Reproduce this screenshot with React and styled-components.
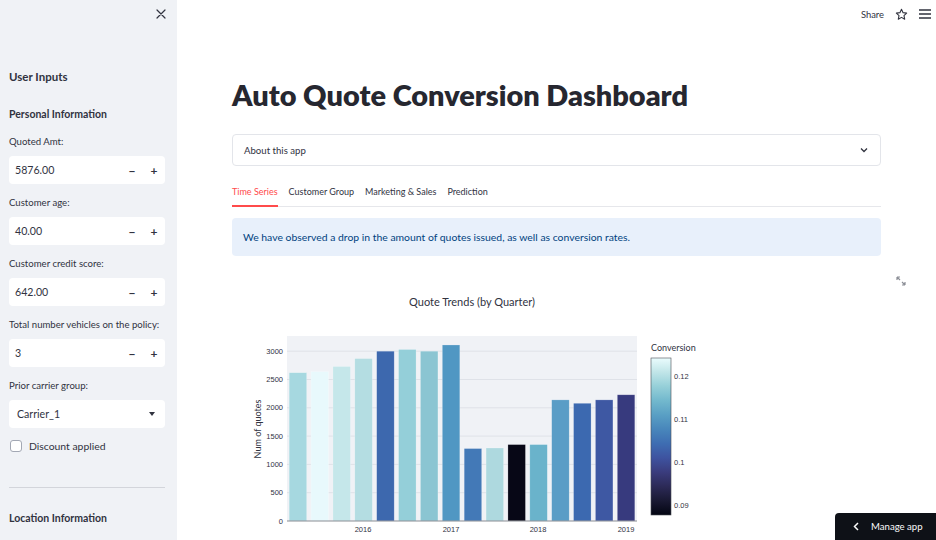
import React from 'react';
import styled, { createGlobalStyle } from 'styled-components';

const GlobalStyle = createGlobalStyle`
  html, body { margin: 0; padding: 0; }
  body {
    font-family: "Lato", "Noto Sans", sans-serif;
    color: #31333f;
    background: #ffffff;
    overflow: hidden;
  }
`;

const Page = styled.div`
  display: flex;
  width: 936px;
  height: 540px;
  overflow: hidden;
`;

const Sidebar = styled.aside`
  width: 177px;
  flex-shrink: 0;
  background: #f0f2f6;
  padding: 0 12px 0 9px;
  box-sizing: border-box;
  display: flex;
  flex-direction: column;
  & > * { flex-shrink: 0; }
`;

const CloseRow = styled.div`
  height: 28px;
  display: flex;
  align-items: center;
  justify-content: flex-end;
  margin-right: -1px;
`;

const SideHeading = styled.div`
  font-weight: 700;
  font-size: ${p => p.big ? '11.5px' : '10.5px'};
  line-height: 16px;
  color: #31333f;
  margin-top: ${p => p.top}px;
`;

const Field = styled.div`
  display: flex;
  flex-direction: column;
  margin-top: ${p => p.top || 12}px;
`;

const Label = styled.label`
  font-size: 9.6px;
  line-height: 14px;
  color: #31333f;
  margin-bottom: 7px;
`;

const InputBox = styled.div`
  height: 28px;
  background: #ffffff;
  border-radius: 4px;
  display: flex;
  align-items: center;
  padding-left: ${p => p.select ? 8 : 6}px;
  font-size: 10.6px;
  color: #31333f;
`;

const Value = styled.span`
  flex: 1;
`;

const Step = styled.span`
  width: 22px;
  text-align: center;
  font-size: 12px;
  font-weight: 700;
  color: #31333f;
`;

const Caret = styled.span`
  width: 0;
  height: 0;
  border-left: 3.5px solid transparent;
  border-right: 3.5px solid transparent;
  border-top: 4px solid #31333f;
  margin-right: 10px;
`;

const CheckRow = styled.div`
  display: flex;
  align-items: center;
  height: 16px;
  margin-top: 10px;
  font-size: 10.4px;
  gap: 7px;
`;

const CheckBox = styled.span`
  width: 10px;
  height: 10px;
  border: 1px solid #a3a8b4;
  border-radius: 3px;
  background: #ffffff;
  margin-left: 1px;
`;

const Divider = styled.hr`
  border: none;
  border-top: 1px solid #d3d5db;
  margin: 33px 0 0;
`;

const Main = styled.main`
  flex: 1;
  position: relative;
  display: flex;
  justify-content: center;
`;

const Content = styled.div`
  width: 649px;
  display: flex;
  flex-direction: column;
  & > * { flex-shrink: 0; }
`;

const Title = styled.h1`
  margin: 75px 0 0;
  font-size: 28.9px;
  line-height: 40px;
  font-weight: 800;
  color: #262730;
`;

const Expander = styled.div`
  margin-top: 19px;
  height: 32px;
  border: 1px solid #e3e5ea;
  border-radius: 4px;
  box-sizing: border-box;
  display: flex;
  align-items: center;
  justify-content: space-between;
  padding: 0 11px;
  font-size: 9.6px;
`;

const TabList = styled.div`
  margin-top: 14px;
  display: flex;
  gap: 11px;
  border-bottom: 1px solid #e6e7eb;
`;

const Tab = styled.div`
  font-size: 9px;
  line-height: 12px;
  padding: 6px 0 7px;
  margin-bottom: -1px;
  color: ${p => p.active ? '#ff4b4b' : '#31333f'};
  border-bottom: 2px solid ${p => p.active ? '#ff4b4b' : 'transparent'};
`;

const Info = styled.div`
  margin-top: 11px;
  height: 38px;
  background: #e8f0fb;
  border-radius: 4px;
  display: flex;
  align-items: center;
  padding: 0 11px;
  font-size: 10.4px;
  color: #004280;
`;

const ChartWrap = styled.div`
  position: relative;
  margin-top: 10px;
  height: 274px;
`;

const ExpandBtn = styled.div`
  position: absolute;
  right: -26px;
  top: 5px;
`;

const TopBar = styled.div`
  position: absolute;
  top: 0;
  right: 0;
  height: 28px;
  display: flex;
  align-items: center;
  gap: 11px;
  padding-right: 5px;
  font-size: 9.4px;
  color: #31333f;
`;

const ManageBtn = styled.div`
  position: absolute;
  right: 0;
  bottom: 0;
  width: 101px;
  height: 27px;
  background: #0e1117;
  border-top-left-radius: 4px;
  display: flex;
  align-items: center;
  gap: 12px;
  padding-left: 18px;
  box-sizing: border-box;
  color: #fafafa;
  font-size: 9.6px;
`;

const fields = [
  ['Quoted Amt:', '5876.00'],
  ['Customer age:', '40.00'],
  ['Customer credit score:', '642.00'],
  ['Total number vehicles on the policy:', '3'],
];

const bars = [
  [2620, '#a6d8e0'], [2640, '#e8f9fc'], [2730, '#c5e7ea'], [2870, '#b4dde2'],
  [3000, '#3d68ae'], [3030, '#94cfd9'], [3000, '#8bc5d2'], [3110, '#5097c3'],
  [1280, '#4379b7'], [1290, '#aed9df'], [1350, '#070716'], [1350, '#6ab3cb'],
  [2140, '#5a9dc6'], [2080, '#3c69b0'], [2140, '#3e58a3'], [2230, '#373a7e'],
];

const ice = ['rgb(3,5,18)', 'rgb(25,25,51)', 'rgb(44,42,87)', 'rgb(58,60,125)', 'rgb(62,83,160)',
  'rgb(62,109,178)', 'rgb(72,134,187)', 'rgb(89,159,196)', 'rgb(114,184,205)', 'rgb(149,207,216)',
  'rgb(192,229,232)', 'rgb(234,252,253)'];

const Chart = () => {
  const x0 = 55, x1 = 405, yZero = 255, yTop = 70;
  const k = 28.3 / 500;
  const pitch = (x1 - x0) / bars.length;
  const bw = pitch * 0.8;
  const tickFont = { fontFamily: '"Liberation Sans", sans-serif', fontSize: 7.5, fill: '#31333f' };
  return (
    <svg width="649" height="274" viewBox="0 0 649 274">
      <defs>
        <linearGradient id="ice" x1="0" y1="1" x2="0" y2="0">
          {ice.map((c, i) => <stop key={i} offset={i / (ice.length - 1)} stopColor={c} />)}
        </linearGradient>
      </defs>
      <text x="240" y="40" textAnchor="middle" style={{ fontFamily: '"Lato", sans-serif', fontSize: 11, fill: '#31333f' }}>
        Quote Trends (by Quarter)
      </text>
      <rect x={x0} y={yTop} width={x1 - x0} height={yZero - yTop} fill="#f0f2f6" />
      {[500, 1000, 1500, 2000, 2500, 3000].map(v => (
        <line key={v} x1={x0} x2={x1} y1={yZero - v * k} y2={yZero - v * k} stroke="#dfe2e8" strokeWidth="1" />
      ))}
      {[0, 500, 1000, 1500, 2000, 2500, 3000].map(v => (
        <text key={v} x={x0 - 4} y={yZero - v * k + 2.5} textAnchor="end" style={tickFont}>{v}</text>
      ))}
      {bars.map(([v, c], i) => (
        <rect key={i} x={x0 + i * pitch + (pitch - bw) / 2} y={yZero - v * k} width={bw} height={v * k}
          fill={c} stroke="#ffffff" strokeOpacity="0.35" strokeWidth="0.6" />
      ))}
      <line x1={x0} x2={x1} y1={yZero} y2={yZero} stroke="#8a8d94" strokeWidth="1" />
      {[['2016', 131], ['2017', 219], ['2018', 306], ['2019', 394]].map(([t, x]) => (
        <text key={t} x={x} y="266" textAnchor="middle" style={tickFont}>{t}</text>
      ))}
      <text x="0" y="0" transform="translate(29 163) rotate(-90)" textAnchor="middle"
        style={{ fontFamily: '"Lato", sans-serif', fontSize: 9, fill: '#31333f' }}>Num of quotes</text>
      <text x="419" y="85" style={{ fontFamily: '"Lato", sans-serif', fontSize: 9, fill: '#31333f' }}>Conversion</text>
      <rect x="419" y="92" width="20" height="157" fill="url(#ice)" stroke="#4b4e56" strokeWidth="0.6" />
      {[['0.12', 110], ['0.11', 153], ['0.1', 196], ['0.09', 239]].map(([t, y]) => (
        <text key={t} x="442" y={y + 2.5} style={tickFont}>{t}</text>
      ))}
    </svg>
  );
};

export default function App() {
  return (
    <>
      <GlobalStyle />
      <Page>
        <Sidebar>
          <CloseRow>
            <svg width="10" height="10" viewBox="0 0 10 10">
              <path d="M1 1 L9 9 M9 1 L1 9" stroke="#31333f" strokeWidth="1.2" strokeLinecap="round" />
            </svg>
          </CloseRow>
          <SideHeading big top={41}>User Inputs</SideHeading>
          <SideHeading top={21}>Personal Information</SideHeading>
          {fields.map(([l, v], i) => (
            <Field key={l} top={i === 0 ? 13 : 12}>
              <Label>{l}</Label>
              <InputBox>
                <Value>{v}</Value>
                <Step>−</Step>
                <Step>+</Step>
              </InputBox>
            </Field>
          ))}
          <Field>
            <Label>Prior carrier group:</Label>
            <InputBox select>
              <Value>Carrier_1</Value>
              <Caret />
            </InputBox>
          </Field>
          <CheckRow>
            <CheckBox />
            Discount applied
          </CheckRow>
          <Divider />
          <SideHeading top={22}>Location Information</SideHeading>
        </Sidebar>
        <Main>
          <TopBar>
            <span>Share</span>
            <svg width="13" height="13" viewBox="0 0 24 24" fill="none" stroke="#31333f" strokeWidth="2" strokeLinejoin="round">
              <path d="M12 2.5l2.9 6.1 6.6.8-4.9 4.6 1.3 6.6L12 17.3l-5.9 3.3 1.3-6.6-4.9-4.6 6.6-.8z" />
            </svg>
            <svg width="12" height="10" viewBox="0 0 12 10">
              <path d="M0 1h12M0 5h12M0 9h12" stroke="#31333f" strokeWidth="1.3" />
            </svg>
          </TopBar>
          <Content>
            <Title>Auto Quote Conversion Dashboard</Title>
            <Expander>
              <span>About this app</span>
              <svg width="10" height="10" viewBox="0 0 10 10">
                <path d="M2 3.5 L5 6.5 L8 3.5" fill="none" stroke="#31333f" strokeWidth="1.3" />
              </svg>
            </Expander>
            <TabList>
              <Tab active>Time Series</Tab>
              <Tab>Customer Group</Tab>
              <Tab>Marketing &amp; Sales</Tab>
              <Tab>Prediction</Tab>
            </TabList>
            <Info>We have observed a drop in the amount of quotes issued, as well as conversion rates.</Info>
            <ChartWrap>
              <ExpandBtn>
                <svg width="12" height="12" viewBox="0 0 12 12" fill="none" stroke="#8b8e96" strokeWidth="1.2">
                  <path d="M2 2l3 3M2 2h3M2 2v3M10 10L7 7M10 10H7M10 10V7" />
                </svg>
              </ExpandBtn>
              <Chart />
            </ChartWrap>
          </Content>
          <ManageBtn>
            <svg width="6" height="9" viewBox="0 0 6 9">
              <path d="M5 1 L1.5 4.5 L5 8" fill="none" stroke="#fafafa" strokeWidth="1.5" />
            </svg>
            Manage app
          </ManageBtn>
        </Main>
      </Page>
    </>
  );
}
